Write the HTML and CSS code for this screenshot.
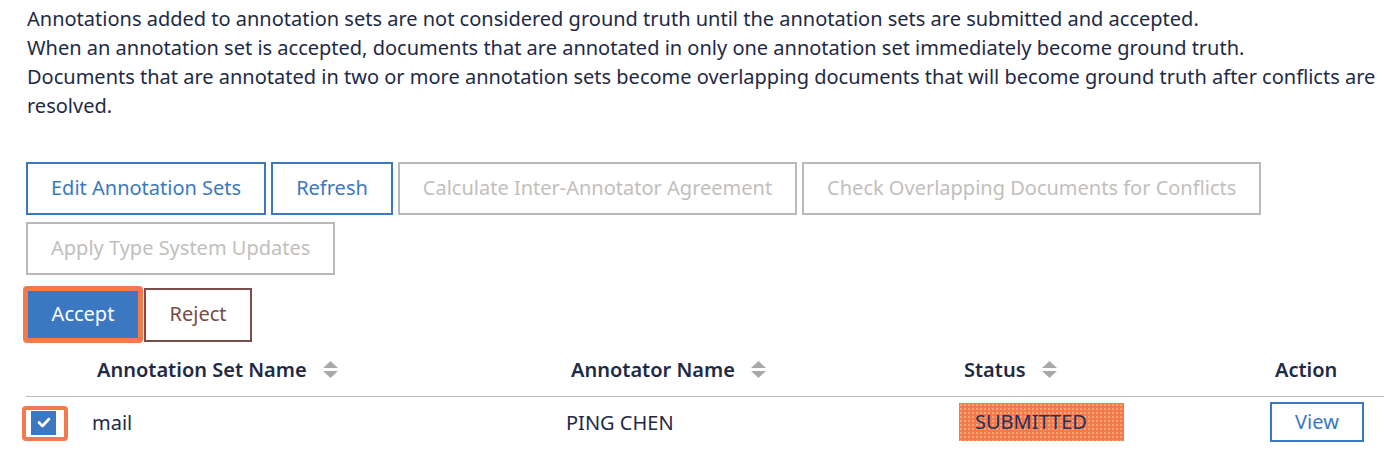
FILE: index.html
```html
<!DOCTYPE html>
<html>
<head>
<meta charset="utf-8">
<link rel="stylesheet" href="styles.css">
</head>
<body>
<div class="page">
  <div class="intro">
    <p>Annotations added to annotation sets are not considered ground truth until the annotation sets are submitted and accepted.</p>
    <p>When an annotation set is accepted, documents that are annotated in only one annotation set immediately become ground truth.</p>
    <p>Documents that are annotated in two or more annotation sets become overlapping documents that will become ground truth after conflicts are resolved.</p>
  </div>

  <div class="toolbar">
    <button class="btn btn-primary-outline">Edit Annotation Sets</button>
    <button class="btn btn-primary-outline">Refresh</button>
    <button class="btn btn-disabled">Calculate Inter-Annotator Agreement</button>
    <button class="btn btn-disabled">Check Overlapping Documents for Conflicts</button>
    <button class="btn btn-disabled">Apply Type System Updates</button>
  </div>

  <div class="actions">
    <span class="highlight accept-wrap"><button class="btn-accept">Accept</button></span>
    <button class="btn-reject">Reject</button>
  </div>

  <table class="sets">
    <colgroup>
      <col class="c0"><col class="c1"><col class="c2"><col class="c3"><col class="c4">
    </colgroup>
    <thead>
      <tr>
        <th></th>
        <th><span class="th-inner">Annotation Set Name <svg class="sort" width="15" height="17" viewBox="0 0 15 17"><path d="M7.5 0 L15 7 L0 7 Z" fill="#a9a9a9"/><path d="M0 10 L15 10 L7.5 17 Z" fill="#a9a9a9"/></svg></span></th>
        <th><span class="th-inner">Annotator Name <svg class="sort" width="15" height="17" viewBox="0 0 15 17"><path d="M7.5 0 L15 7 L0 7 Z" fill="#a9a9a9"/><path d="M0 10 L15 10 L7.5 17 Z" fill="#a9a9a9"/></svg></span></th>
        <th><span class="th-inner">Status <svg class="sort" width="15" height="17" viewBox="0 0 15 17"><path d="M7.5 0 L15 7 L0 7 Z" fill="#a9a9a9"/><path d="M0 10 L15 10 L7.5 17 Z" fill="#a9a9a9"/></svg></span></th>
        <th><span class="th-inner">Action</span></th>
      </tr>
    </thead>
    <tbody>
      <tr>
        <td><span class="highlight check-wrap"><span class="checkbox"><svg width="14" height="11" viewBox="0 0 14 11"><path d="M2 5.5 L5.5 9 L12 2" fill="none" stroke="#fff" stroke-width="2.6" stroke-linecap="round" stroke-linejoin="round"/></svg></span></span></td>
        <td>mail</td>
        <td>PING CHEN</td>
        <td><span class="badge">SUBMITTED</span></td>
        <td><button class="btn-view">View</button></td>
      </tr>
    </tbody>
  </table>
</div>
</body>
</html>
```

FILE: styles.css
```css
* { box-sizing: border-box; }
html, body { margin: 0; padding: 0; background: #fff; }
body {
  font-family: "Noto Sans", "Liberation Sans", sans-serif;
  font-size: 20px;
  color: #1e2a45;
  overflow: hidden;
}
.page { padding: 4px 0 0 26px; }
.intro { padding-left: 1px; }
.intro p { margin: 0; line-height: 29px; }

.toolbar {
  display: flex;
  flex-wrap: wrap;
  gap: 7px 5px;
  margin-top: 42px;
}
.btn {
  font-family: inherit;
  font-size: 20px;
  height: 53px;
  padding: 0 23px 3px;
  background: #fff;
  border: 2px solid;
  cursor: pointer;
}
.btn-primary-outline { border-color: #3b78c1; color: #3b78c1; }
.btn-disabled { border-color: #b9b9b9; color: #c2bebb; }

.actions {
  display: flex;
  align-items: center;
  margin-top: 11px;
  margin-left: -3px;
}
.highlight {
  display: inline-flex;
  border: 4px solid #f47a4c;
  border-radius: 4px;
}
.accept-wrap { border-width: 5px; }
.btn-accept {
  font-family: inherit;
  font-size: 20px;
  width: 110px;
  height: 47px;
  padding: 0 0 3px;
  background: #3b78c1;
  color: #fff;
  border: 0;
}
.btn-reject {
  font-family: inherit;
  font-size: 20px;
  width: 108px;
  height: 54px;
  padding: 0 0 3px;
  margin-left: 1px;
  background: #fff;
  color: #7a4a44;
  border: 2px solid #7a4f4b;
}

.sets {
  border-collapse: collapse;
  table-layout: fixed;
  width: 1358px;
}
.c0 { width: 66px; }
.c1 { width: 474px; }
.c2 { width: 393px; }
.c3 { width: 311px; }
.c4 { width: 114px; }
.sets th {
  text-align: left;
  font-weight: 600;
  height: 53px;
  padding: 0 0 0 5px;
  border-bottom: 1px solid #bdbdbd;
  vertical-align: middle;
}
.th-inner { display: inline-flex; align-items: center; padding-top: 1px; }
.sort { margin-left: 16px; }
.sets td {
  padding: 0;
  height: 52px;
  vertical-align: middle;
}
.check-wrap {
  margin-left: -4px;
  padding: 1px 8px 2px 5px;
  margin-top: 2px;
}
.checkbox {
  width: 25px;
  height: 24px;
  background: #3b78c1;
  display: flex;
  align-items: center;
  justify-content: center;
}
.badge {
  display: inline-block;
  width: 165px;
  height: 38px;
  line-height: 37px;
  padding-left: 16px;
  color: #23305a;
  background-color: #f47a4c;
  background-image: radial-gradient(circle, rgba(255, 226, 190, 0.7) 0.5px, transparent 1px);
  background-size: 4px 4px;
}
.btn-view {
  font-family: inherit;
  font-size: 20px;
  width: 94px;
  height: 40px;
  padding: 0 0 2px;
  background: #fff;
  color: #3b78c1;
  border: 2px solid #3b78c1;
}
```
